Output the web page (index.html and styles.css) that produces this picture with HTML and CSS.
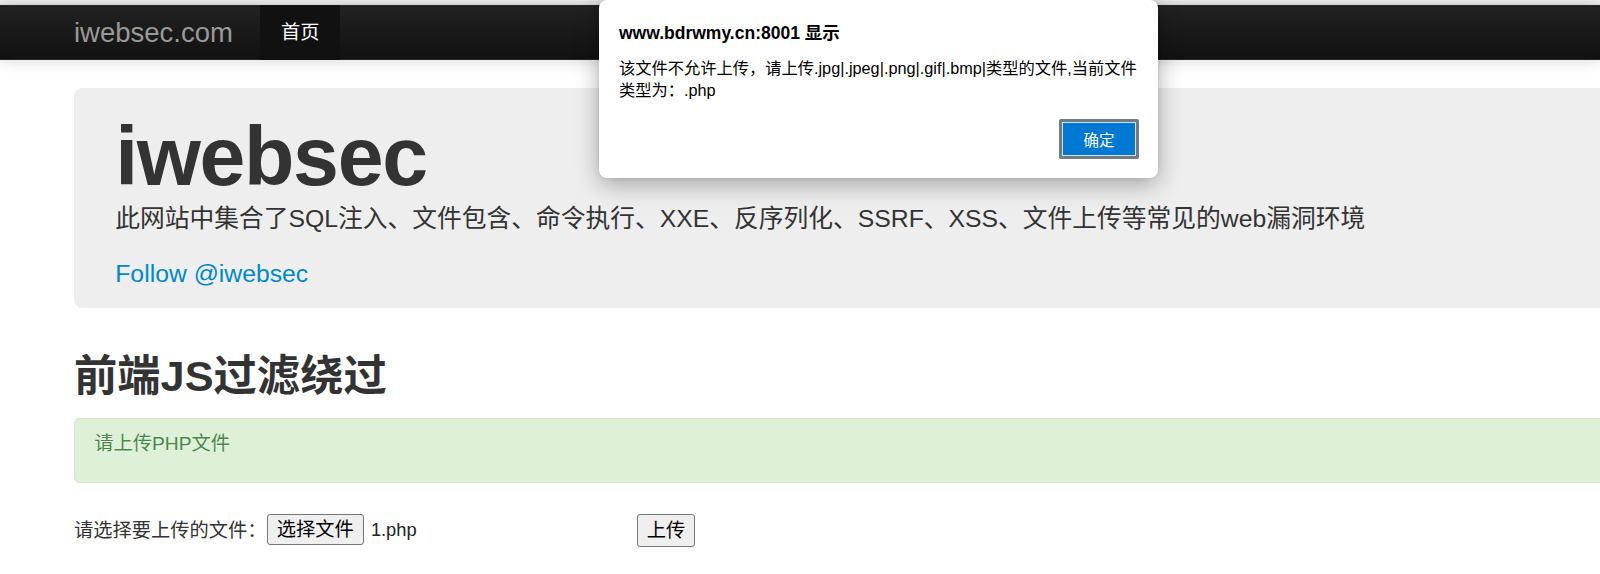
FILE: index.html
```html
<!DOCTYPE html>
<html lang="zh-CN">
<head>
<meta charset="utf-8">
<title>iwebsec</title>
<link rel="stylesheet" href="styles.css">
</head>
<body>
<div class="top-edge"></div>
<div class="navbar">
  <div class="navbar-inner">
    <a class="brand" href="#">iwebsec.com</a>
    <ul class="nav">
      <li class="active"><a href="#">首页</a></li>
    </ul>
  </div>
</div>

<div class="container">
  <div class="hero-unit">
    <h1>iwebsec</h1>
    <p class="lead">此网站中集合了SQL注入、文件包含、命令执行、XXE、反序列化、SSRF、XSS、文件上传等常见的web漏洞环境</p>
    <p class="follow"><a href="#">Follow @iwebsec</a></p>
  </div>

  <h2 class="page-title">前端JS过滤绕过</h2>

  <div class="alert alert-success">
    <p>请上传PHP文件</p>
  </div>

  <form class="upload-form">
    <span class="upload-label">请选择要上传的文件：</span>
    <span class="file-input">
      <span class="btn-native file-btn">选择文件</span>
      <span class="file-name">1.php</span>
    </span>
    <button type="button" class="btn-native submit-btn">上传</button>
  </form>
</div>

<div class="dialog">
  <div class="dialog-title">www.bdrwmy.cn:8001 显示</div>
  <div class="dialog-msg">该文件不允许上传，请上传.jpg|.jpeg|.png|.gif|.bmp|类型的文件,当前文件<br>类型为：.php</div>
  <div class="dialog-actions">
    <button type="button" class="dialog-ok">确定</button>
  </div>
</div>
</body>
</html>
```

FILE: styles.css
```css
html, body {
  margin: 0;
  padding: 0;
}

body {
  background: #fff;
  overflow: hidden;
  width: 1600px;
  height: 574px;
  font-family: "Liberation Sans", "Noto Sans CJK SC", sans-serif;
  font-size: 19.25px;
  line-height: 27.5px;
  color: #333;
  position: relative;
}

a {
  text-decoration: none;
}

.top-edge {
  height: 5px;
  background: linear-gradient(#f0f0f0, #e4e4e4);
}

/* navbar */
.navbar {
  position: relative;
  z-index: 2;
  box-shadow: 0 1px 14px rgba(0, 0, 0, 0.16);
}

.navbar-inner {
  display: flex;
  align-items: stretch;
  height: 55px;
  box-sizing: border-box;
  padding-left: 74px;
  background: linear-gradient(#222222, #111111);
  border-bottom: 1px solid #252525;
}

.brand {
  display: block;
  padding: 13.75px 27.5px 13.75px 0;
  font-size: 27.5px;
  line-height: 27.5px;
  color: #999;
  font-weight: 200;
}

.nav {
  display: flex;
  margin: 0;
  padding: 0;
  list-style: none;
}

.nav li a {
  display: block;
  padding: 13.75px 20.6px;
  font-size: 19.25px;
  line-height: 27.5px;
  color: #999;
}

.nav li.active a {
  background: #111;
  color: #fff;
}

/* main container */
.container {
  margin-left: 74px;
  width: 1610px;
  padding-top: 27.5px;
}

.hero-unit {
  display: flow-root;
  padding: 13.75px 41.25px 0;
  margin-bottom: 41.25px;
  background: #eee;
  border-radius: 8.25px;
}

.hero-unit h1 {
  margin: 13.75px 0 0;
  font-size: 82.5px;
  line-height: 1;
  letter-spacing: -1.375px;
  font-weight: bold;
  color: #333;
}

.hero-unit p {
  margin: 0 0 13.75px;
  font-size: 24.75px;
  line-height: 41.25px;
  font-weight: 400;
}

.follow a {
  color: #0088cc;
}

.page-title {
  margin: 13.75px 0;
  font-size: 43.3px;
  line-height: 55px;
  font-weight: bold;
  color: #333;
}

.alert {
  padding: 11px 48px 11px 19.25px;
  margin-bottom: 27.5px;
  border: 1px solid #d6e9c6;
  border-radius: 5.5px;
  background: #dff0d8;
  color: #468847;
  text-shadow: 0 1px 0 rgba(255, 255, 255, 0.5);
}

.alert p {
  margin: 0 0 13.75px;
}

/* upload form */
.upload-form {
  display: flex;
  align-items: flex-start;
  padding-top: 4px;
  margin: 0;
}

.upload-label {
  line-height: 33px;
  color: #333;
}

.file-input {
  display: flex;
  align-items: center;
  width: 365px;
  height: 31px;
}

.btn-native {
  box-sizing: border-box;
  display: inline-flex;
  align-items: center;
  justify-content: center;
  border: 1px solid #767676;
  border-radius: 3px;
  background: #efefef;
  color: #000;
  font-family: "Liberation Sans", "Noto Sans CJK SC", sans-serif;
  font-size: 19.25px;
  line-height: 1;
  padding: 0 9.2px;
}

.file-btn {
  height: 31px;
}

.file-name {
  margin-left: 7px;
  font-size: 18.3px;
  color: #222;
}

.submit-btn {
  margin-left: 5px;
  height: 33px;
}

/* alert dialog */
.dialog {
  position: absolute;
  left: 599px;
  top: 0;
  width: 559px;
  height: 178px;
  box-sizing: border-box;
  padding: 21px 19px 19px 20px;
  display: flex;
  flex-direction: column;
  background: #fff;
  border-radius: 8px;
  box-shadow: 0 6px 24px rgba(0, 0, 0, 0.32), 0 0 4px rgba(0, 0, 0, 0.08);
  z-index: 10;
  color: #000;
  font-family: "Liberation Sans", "Noto Sans CJK SC", sans-serif;
}

.dialog-title {
  font-size: 17.5px;
  line-height: 24px;
  font-weight: bold;
}

.dialog-msg {
  margin-top: 11.6px;
  font-size: 16.25px;
  line-height: 22.7px;
}

.dialog-actions {
  margin-top: auto;
  display: flex;
  justify-content: flex-end;
}

.dialog-ok {
  box-sizing: border-box;
  width: 80px;
  height: 40px;
  border: 3px solid #727a83;
  background: #0078d4;
  box-shadow: inset 0 0 0 1px #cfe4f9;
  color: #fff;
  font-family: "Liberation Sans", "Noto Sans CJK SC", sans-serif;
  font-size: 15.5px;
  padding: 0;
  border-radius: 2px;
}
```
